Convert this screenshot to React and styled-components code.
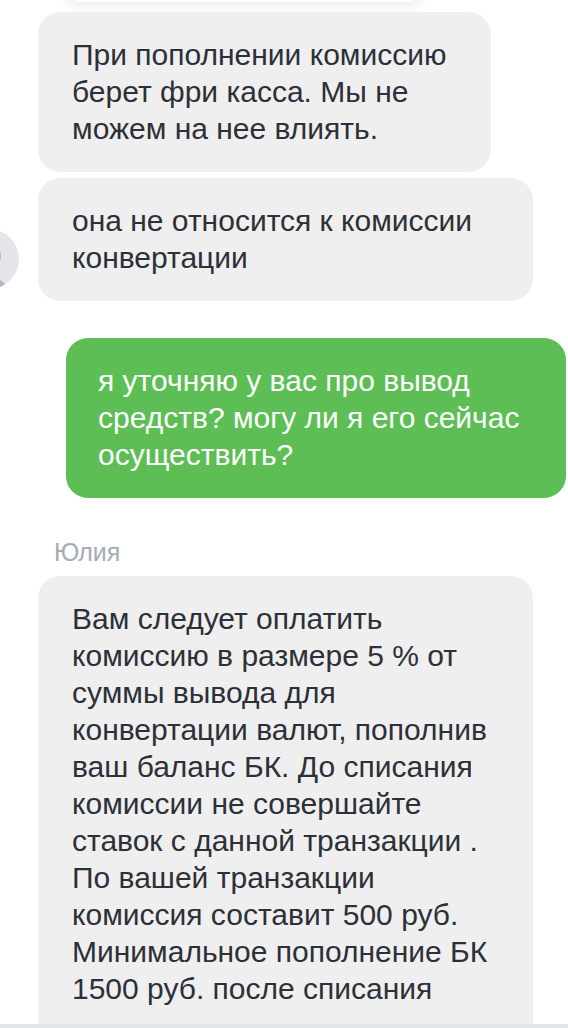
import React from "react";
import styled, { createGlobalStyle } from "styled-components";

const GlobalStyle = createGlobalStyle`
  html, body {
    margin: 0;
    padding: 0;
    background: #ffffff;
    overflow: hidden;
  }
  body {
    font-family: "Liberation Sans", Arial, sans-serif;
  }
`;

const Page = styled.div`
  display: flex;
  flex-direction: column;
  height: 100vh;
`;

const Feed = styled.div`
  flex: 1;
  min-height: 0;
  overflow: hidden;
  padding: 0 2px 0 38px;
`;

const TopCard = styled.div`
  height: 40px;
  margin: -38px 138px 10px 22px;
  background: #ffffff;
  border-radius: 0 0 24px 24px;
  box-shadow: 0 4px 14px rgba(0, 0, 0, 0.07);
`;

const Group = styled.div`
  display: flex;
  align-items: flex-end;
  gap: 19px;
  margin-left: -79px;
`;

const Avatar = styled.div`
  flex: none;
  width: 60px;
  height: 60px;
  margin-bottom: 12px;
  border-radius: 50%;
  overflow: hidden;
  svg {
    display: block;
  }
`;

const Stack = styled.div`
  display: flex;
  flex-direction: column;
  gap: 6px;
`;

const Bubble = styled.div`
  box-sizing: border-box;
  flex: none;
  width: ${(p) => p.$width}px;
  padding: 24px 34px ${(p) => (p.$open ? 80 : 25)}px ${(p) => (p.$out ? 32 : 34)}px;
  border-radius: 22px;
  background: ${(p) => (p.$out ? "#5cbe55" : "#efefef")};
  color: ${(p) => (p.$out ? "#ffffff" : "#2c3038")};
  font-size: 30px;
  line-height: 37px;
`;

const OutRow = styled.div`
  display: flex;
  justify-content: flex-end;
  margin-top: 37px;
`;

const Name = styled.div`
  margin: 39px 0 9px 16px;
  font-size: 25px;
  line-height: 30px;
  color: #a3abb5;
`;

const Footer = styled.div`
  flex: none;
  height: 4px;
  background: #e2e5e9;
`;

const AvatarPic = () => (
  <svg width="60" height="60" viewBox="0 0 60 60">
    <rect width="60" height="60" fill="#e5e6ea" />
    <circle cx="30" cy="27" r="12" fill="#b7b8bc" />
    <ellipse cx="30" cy="66" rx="20" ry="18" fill="#b7b8bc" />
  </svg>
);

const App = () => {
  return (
    <>
      <GlobalStyle />
      <Page>
        <Feed>
          <TopCard />
          <Group>
            <Avatar>
              <AvatarPic />
            </Avatar>
            <Stack>
              <Bubble $width={453}>
                При пополнении комиссию берет фри касса. Мы не можем на нее влиять.
              </Bubble>
              <Bubble $width={495}>она не относится к комиссии конвертации</Bubble>
            </Stack>
          </Group>

          <OutRow>
            <Bubble $out $width={500}>
              я уточняю у вас про вывод средств? могу ли я его сейчас осуществить?
            </Bubble>
          </OutRow>

          <Name>Юлия</Name>
          <Bubble $open $width={495}>
            Вам следует оплатить комиссию в размере 5 % от суммы вывода для
            конвертации валют, пополнив ваш баланс БК. До списания комиссии не
            совершайте ставок с данной транзакции . По вашей транзакции комиссия
            составит 500 руб. Минимальное пополнение БК 1500 руб. после списания
          </Bubble>
        </Feed>
        <Footer />
      </Page>
    </>
  );
};

export default App;
